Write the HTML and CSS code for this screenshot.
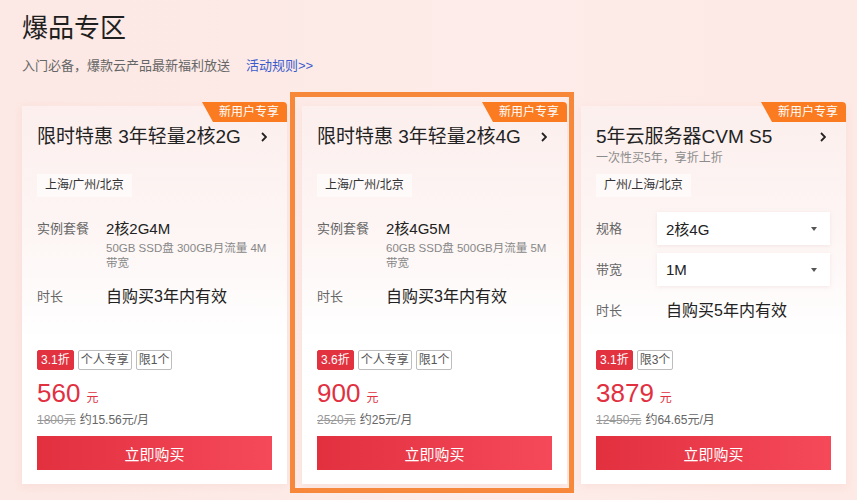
FILE: index.html
```html
<!DOCTYPE html>
<html lang="zh-CN">
<head>
<meta charset="utf-8">
<title>爆品专区</title>
<link rel="stylesheet" href="styles.css">
</head>
<body>
<div class="page">
  <h1 class="title">爆品专区</h1>
  <div class="intro">
    <span class="intro-text">入门必备，爆款云产品最新福利放送</span>
    <a class="rules" href="#">活动规则&gt;&gt;</a>
  </div>

  <div class="cards">
    <div class="card card-first">
      <div class="badge">新用户专享</div>
      <div class="card-head">
        <span class="card-title">限时特惠 3年轻量2核2G</span>
        <svg class="chev" width="6" height="10" viewBox="0 0 6 10"><polyline points="1,1 5,5 1,9" fill="none" stroke="#222" stroke-width="1.8"/></svg>
      </div>
      <div class="card-sub"></div>
      <span class="region">上海/广州/北京</span>
      <div class="row row-spec">
        <span class="label">实例套餐</span>
        <div class="value-block">
          <div class="value">2核2G4M</div>
          <div class="value-note">50GB SSD盘 300GB月流量 4M 带宽</div>
        </div>
      </div>
      <div class="row row-dur">
        <span class="label">时长</span>
        <span class="value value-lg">自购买3年内有效</span>
      </div>
      <div class="bottom">
        <div class="tags">
          <span class="tag tag-red">3.1折</span>
          <span class="tag">个人专享</span>
          <span class="tag">限1个</span>
        </div>
        <div class="price"><span class="num">560</span><span class="unit">元</span></div>
        <div class="orig"><s>1800元</s><span class="monthly">约15.56元/月</span></div>
        <button class="buy">立即购买</button>
      </div>
    </div>

    <div class="frame">
      <div class="card">
        <div class="badge">新用户专享</div>
        <div class="card-head">
          <span class="card-title">限时特惠 3年轻量2核4G</span>
          <svg class="chev" width="6" height="10" viewBox="0 0 6 10"><polyline points="1,1 5,5 1,9" fill="none" stroke="#222" stroke-width="1.8"/></svg>
        </div>
        <div class="card-sub"></div>
        <span class="region">上海/广州/北京</span>
        <div class="row row-spec">
          <span class="label">实例套餐</span>
          <div class="value-block">
            <div class="value">2核4G5M</div>
            <div class="value-note">60GB SSD盘 500GB月流量 5M 带宽</div>
          </div>
        </div>
        <div class="row row-dur">
          <span class="label">时长</span>
          <span class="value value-lg">自购买3年内有效</span>
        </div>
        <div class="bottom">
          <div class="tags">
            <span class="tag tag-red">3.6折</span>
            <span class="tag">个人专享</span>
            <span class="tag">限1个</span>
          </div>
          <div class="price"><span class="num">900</span><span class="unit">元</span></div>
          <div class="orig"><s>2520元</s><span class="monthly">约25元/月</span></div>
          <button class="buy">立即购买</button>
        </div>
      </div>
    </div>

    <div class="card card-last">
      <div class="badge">新用户专享</div>
      <div class="card-head">
        <span class="card-title">5年云服务器CVM S5</span>
        <svg class="chev" width="6" height="10" viewBox="0 0 6 10"><polyline points="1,1 5,5 1,9" fill="none" stroke="#222" stroke-width="1.8"/></svg>
      </div>
      <div class="card-sub">一次性买5年，享折上折</div>
      <span class="region">广州/上海/北京</span>
      <div class="row row-select row-select-first">
        <span class="label label-narrow">规格</span>
        <div class="select"><span>2核4G</span><i class="caret"></i></div>
      </div>
      <div class="row row-select">
        <span class="label label-narrow">带宽</span>
        <div class="select"><span>1M</span><i class="caret"></i></div>
      </div>
      <div class="row row-dur2">
        <span class="label label-narrow">时长</span>
        <span class="value value-lg value-pad">自购买5年内有效</span>
      </div>
      <div class="bottom">
        <div class="tags">
          <span class="tag tag-red">3.1折</span>
          <span class="tag">限3个</span>
        </div>
        <div class="price"><span class="num">3879</span><span class="unit">元</span></div>
        <div class="orig"><s>12450元</s><span class="monthly">约64.65元/月</span></div>
        <button class="buy">立即购买</button>
      </div>
    </div>
  </div>
</div>
</body>
</html>
```
FILE: styles.css
```css
* { box-sizing: border-box; }

html, body {
  margin: 0;
  height: 100%;
}

body {
  background: linear-gradient(90deg, #fce8e4 0%, #fdece9 60%, #fde9e5 100%);
  font-family: "Liberation Sans", "Noto Sans CJK SC", sans-serif;
  color: #222;
  overflow: hidden;
}

.page {
  padding: 10px 0 0 22px;
}

.title {
  margin: 0;
  font-size: 26px;
  line-height: 36px;
  font-weight: normal;
  color: #1f1f1f;
}

.intro {
  margin-top: 10px;
  display: flex;
  align-items: center;
  font-size: 13px;
  line-height: 20px;
}

.intro-text { color: #666; }

.rules {
  margin-left: 16px;
  color: #3b5bcc;
  text-decoration: none;
}

.cards {
  margin-top: 16px;
  display: flex;
  align-items: flex-start;
}

.card {
  position: relative;
  width: 265px;
  height: 378px;
  padding: 0 15px 14px 15px;
  display: flex;
  flex-direction: column;
  background: linear-gradient(180deg, #fcefed 0%, #fdf6f5 35%, #ffffff 62%);
  box-shadow: 0 2px 8px rgba(236, 170, 160, 0.18);
}

.card-first { margin-top: 14px; }
.card-last { margin-top: 14px; margin-left: 7px; }

.frame {
  margin-left: 3px;
  border: 5px solid #f7883a;
  padding: 9px 2px 4px 7px;
}

.badge {
  position: absolute;
  top: -4px;
  right: 0;
  width: 85px;
  height: 20px;
  padding-left: 9px;
  background: #fb7b20;
  color: #fff;
  font-size: 12px;
  line-height: 20px;
  text-align: center;
  border-top-right-radius: 4px;
  clip-path: polygon(0 0, 100% 0, 100% 100%, 11px 100%);
}

.card-head {
  margin-top: 17px;
  height: 28px;
  display: flex;
  align-items: center;
  justify-content: space-between;
}

.card-title {
  font-size: 19px;
  line-height: 28px;
  color: #222;
  white-space: nowrap;
}

.chev {
  margin-right: 5px;
  flex: none;
}

.card-sub {
  height: 16px;
  margin-top: -1px;
  font-size: 12px;
  line-height: 16px;
  color: #8c8c8c;
}

.region {
  align-self: flex-start;
  margin-top: 8px;
  height: 23px;
  padding: 0 8px;
  background: #fefafa;
  font-size: 12px;
  line-height: 23px;
  color: #333;
}

.row {
  display: flex;
}

.label {
  flex: none;
  width: 69px;
  font-size: 13px;
  line-height: 20px;
  color: #666;
}

.label-narrow { width: 61px; }

.value {
  font-size: 15px;
  line-height: 20px;
  color: #222;
}

.value-lg { font-size: 16px; }
.value-pad { padding-left: 9px; }

.value-block { flex: 1; }

.value-note {
  margin-top: 2px;
  font-size: 11.5px;
  line-height: 15px;
  color: #888;
}

.row-spec { margin-top: 22px; }
.row-dur { margin-top: 16px; }

.row-select {
  margin-top: 8px;
  align-items: center;
}

.row-select-first { margin-top: 15px; }
.row-dur2 { margin-top: 15px; }

.select {
  position: relative;
  width: 173px;
  height: 33px;
  padding-left: 9px;
  display: flex;
  align-items: center;
  background: #fff;
  box-shadow: 0 1px 4px rgba(220, 180, 175, 0.25);
  font-size: 15px;
  color: #222;
}

.caret {
  position: absolute;
  right: 13px;
  top: 15px;
  width: 0;
  height: 0;
  border-left: 3.5px solid transparent;
  border-right: 3.5px solid transparent;
  border-top: 4px solid #555;
}

.bottom {
  margin-top: auto;
  display: flex;
  flex-direction: column;
}

.tags {
  display: flex;
  gap: 4px;
  height: 20px;
}

.tag {
  height: 20px;
  padding: 0 2px;
  border: 1px solid #bdbdbd;
  border-radius: 2px;
  font-size: 12px;
  line-height: 18px;
  color: #555;
  background: #fff;
}

.tag-red {
  padding: 0 3px;
  border-color: #e2323f;
  background: #e2323f;
  color: #fff;
}

.price {
  margin-top: 7px;
  height: 32px;
  display: flex;
  align-items: baseline;
  color: #e1303f;
}

.num {
  font-size: 26px;
  line-height: 32px;
}

.unit {
  margin-left: 6px;
  font-size: 12px;
}

.orig {
  margin-top: 3px;
  height: 16px;
  display: flex;
  align-items: baseline;
  font-size: 12px;
  line-height: 16px;
}

.orig s { color: #999; }

.monthly {
  margin-left: 4px;
  color: #666;
}

.buy {
  margin-top: 8px;
  height: 34px;
  width: 100%;
  border: none;
  padding: 0;
  background: linear-gradient(90deg, #e2303f 0%, #f5495a 100%);
  color: #fff;
  font-family: inherit;
  font-size: 15px;
  cursor: pointer;
}
```
